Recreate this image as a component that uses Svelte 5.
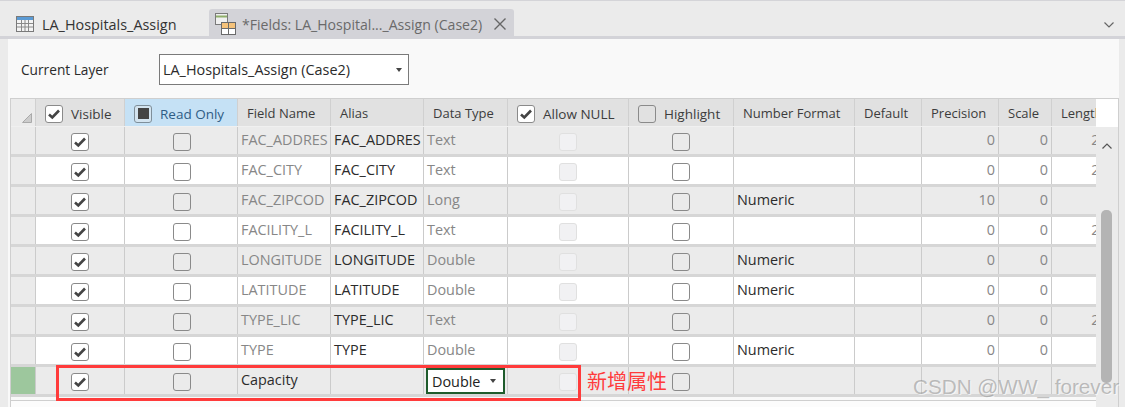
<script>
  const text = 'Text';
  const rows = [
    { name: 'FAC_ADDRES', alias: 'FAC_ADDRES', type: text, fmt: '', prec: 0, len: 254 },
    { name: 'FAC_CITY', alias: 'FAC_CITY', type: text, fmt: '', prec: 0, len: 254 },
    { name: 'FAC_ZIPCOD', alias: 'FAC_ZIPCOD', type: 'Long', fmt: 'Numeric', prec: 10, len: '' },
    { name: 'FACILITY_L', alias: 'FACILITY_L', type: text, fmt: '', prec: 0, len: 254 },
    { name: 'LONGITUDE', alias: 'LONGITUDE', type: 'Double', fmt: 'Numeric', prec: 0, len: '' },
    { name: 'LATITUDE', alias: 'LATITUDE', type: 'Double', fmt: 'Numeric', prec: 0, len: '' },
    { name: 'TYPE_LIC', alias: 'TYPE_LIC', type: text, fmt: '', prec: 0, len: 254 },
    { name: 'TYPE', alias: 'TYPE', type: 'Double', fmt: 'Numeric', prec: 0, len: '' }
  ];
</script>

{#snippet check()}
  <svg width="14" height="12" viewBox="0 0 14 12"><path d="M2 6.5 L5.3 9.5 L12 2.5" fill="none" stroke="#444" stroke-width="2.6" /></svg>
{/snippet}

<div class="page">
  <div class="tabs">
    <div class="tab">
      <svg width="20" height="18" viewBox="0 0 20 18">
        <rect x="1.5" y="1.5" width="17" height="15" fill="#f4f4f4" stroke="#7a7a7a" />
        <rect x="2" y="2" width="16" height="3" fill="#5b9bd5" />
        <path d="M2 8.5h16M2 12h16M6.5 5v11M10 5v11M13.5 5v11" stroke="#8a8a8a" />
      </svg>
      <span class="name">LA_Hospitals_Assign</span>
    </div>
    <div class="tab active">
      <svg width="21" height="23" viewBox="0 0 21 23">
        <rect x=".5" y=".5" width="12" height="11" fill="#f0f0f0" stroke="#7a7a7a" />
        <path d="M1 3.5h11" stroke="#8fae6a" stroke-width="2" />
        <rect x="6.5" y="9.5" width="14" height="12" fill="#fff" stroke="#6a6a6a" />
        <rect x="7" y="10" width="13" height="5.5" fill="#f5c27a" />
        <path d="M7 15.5h13M13.5 10v11" stroke="#6a6a6a" />
      </svg>
      <span>*Fields: LA_Hospital..._Assign (Case2)</span>
      <svg class="close" width="14" height="14" viewBox="0 0 14 14"><path d="M1.5 1.5l11 11M12.5 1.5l-11 11" stroke="#666" stroke-width="1.4" /></svg>
    </div>
    <svg class="more" width="12" height="8" viewBox="0 0 12 8"><path d="M1.5 1.5l4.5 4.5 4.5-4.5" fill="none" stroke="#666" stroke-width="1.2" /></svg>
  </div>

  <div class="panel">
    <div class="layer">
      <label for="layer-box">Current Layer</label>
      <div class="combo" id="layer-box"><span>LA_Hospitals_Assign (Case2)</span><i class="arrow"></i></div>
    </div>

    <div class="grid">
      <div class="table">
        <div class="row head">
          <div class="cell corner"><svg width="10" height="10" viewBox="0 0 10 10"><path d="M9.5 .5V9.5H.5Z" fill="#ccc" stroke="#aaa" /></svg></div>
          <div class="cell boxed"><span class="cb on">{@render check()}</span>Visible</div>
          <div class="cell boxed sel"><span class="cb mixed"><b></b></span>Read Only</div>
          <div class="cell">Field Name</div>
          <div class="cell">Alias</div>
          <div class="cell">Data Type</div>
          <div class="cell boxed"><span class="cb on">{@render check()}</span>Allow NULL</div>
          <div class="cell boxed"><span class="cb"></span>Highlight</div>
          <div class="cell">Number Format</div>
          <div class="cell">Default</div>
          <div class="cell">Precision</div>
          <div class="cell">Scale</div>
          <div class="cell">Length</div>
        </div>

        {#each rows as r, i}
          <div class="row" class:alt={i % 2 === 1}>
            <div class="cell stub"></div>
            <div class="cell mid"><span class="cb on">{@render check()}</span></div>
            <div class="cell mid"><span class="cb shift"></span></div>
            <div class="cell dim">{r.name}</div>
            <div class="cell">{r.alias}</div>
            <div class="cell dim">{r.type}</div>
            <div class="cell mid"><span class="cb off"></span></div>
            <div class="cell mid"><span class="cb"></span></div>
            <div class="cell">{r.fmt}</div>
            <div class="cell"></div>
            <div class="cell num">{r.prec}</div>
            <div class="cell num">0</div>
            <div class="cell num">{r.len}</div>
          </div>
        {/each}

        <div class="row">
          <div class="cell stub new"></div>
          <div class="cell mid"><span class="cb on">{@render check()}</span></div>
          <div class="cell mid"><span class="cb shift"></span></div>
          <div class="cell">Capacity</div>
          <div class="cell"></div>
          <div class="cell edit"><div class="pick"><span>Double</span><i class="arrow"></i></div></div>
          <div class="cell mid"><span class="cb off"></span></div>
          <div class="cell mid"><span class="cb"></span></div>
          <div class="cell"></div>
          <div class="cell"></div>
          <div class="cell"></div>
          <div class="cell"></div>
          <div class="cell"></div>
        </div>
        <div class="foot"></div>
      </div>

      <div class="scroll">
        <div class="scroll-head"></div>
        <svg class="up" width="12" height="8" viewBox="0 0 12 8"><path d="M1.5 6.5l4.5-4.5 4.5 4.5" fill="none" stroke="#555" stroke-width="1.2" /></svg>
        <div class="thumb"></div>
      </div>
    </div>

    <div class="mark"></div>
    <div class="added">新增属性</div>
    <div class="wm">CSDN @WW_ forever</div>
  </div>
</div>

<style>
  :global(body) {
    margin: 0;
    background: #ebebeb;
  }

  .page {
    width: 1125px;
    height: 407px;
    overflow: hidden;
    box-sizing: border-box;
    border-top: 1px solid #d4d4d8;
    font-family: "Open Sans", "Noto Sans", sans-serif;
    font-size: 14.4px;
    color: #2b2b2b;
    display: flex;
    flex-direction: column;
  }

  .tabs {
    height: 35px;
    flex: none;
    display: flex;
    align-items: flex-end;
    padding-left: 15px;
    border-bottom: 3px solid #d3d3d8;
    position: relative;
  }

  .tab {
    display: flex;
    align-items: center;
    height: 27px;
    box-sizing: border-box;
    padding-top: 3px;
    gap: 7px;
    width: 194px;
    color: #333;
  }

  .tab span {
    font-size: 14.1px;
  }

  .tab .name {
    font-size: 14.4px;
  }

  .tab.active {
    width: 305px;
    background: #d3d3d8;
    border-radius: 3px 3px 0 0;
    padding-left: 6px;
    gap: 6px;
    color: #6a6a6a;
  }

  .close {
    margin-left: 5px;
  }

  .more {
    position: absolute;
    right: 10px;
    top: 20px;
  }

  .panel {
    margin-left: 8px;
    margin-right: 6px;
    flex: 1;
    background: #f9f9f9;
    position: relative;
    min-height: 0;
  }

  .layer {
    height: 59px;
    box-sizing: border-box;
    padding: 15px 0 0 13px;
    display: flex;
    align-items: flex-start;
  }

  .layer label {
    width: 138px;
    line-height: 31px;
    font-size: 13.7px;
  }

  .combo {
    width: 250px;
    height: 31px;
    box-sizing: border-box;
    border: 1px solid #7a7a7a;
    background: #fff;
    padding: 0 6px 0 3px;
    display: flex;
    align-items: center;
    justify-content: space-between;
  }

  .arrow {
    width: 0;
    height: 0;
    border: 3px solid transparent;
    border-top: 4px solid #444;
    border-bottom: 0;
  }

  .grid {
    display: flex;
    margin-left: 2px;
    border-top: 1px solid #cfcfcf;
    border-left: 1px solid #cfcfcf;
    border-right: 1px solid #cfcfcf;
  }

  .table {
    width: 1085px;
    overflow: hidden;
  }

  .row {
    display: grid;
    grid-template-columns: 25px 89px 113px 93px 93px 84px 121px 105px 121px 67px 77px 53px 68px;
    width: 1089px;
    height: 30px;
    box-sizing: border-box;
    background: #ebebeb;
    border-bottom: 3px solid #d6d6d6;
  }

  .row.alt {
    background: #fff;
  }

  .cell {
    border-right: 1px solid #cbcbcb;
    padding: 0 3px 2px;
    line-height: 25px;
    white-space: nowrap;
    overflow: hidden;
    display: flex;
    align-items: center;
    box-sizing: border-box;
    min-width: 0;
  }

  .dim {
    color: #878787;
  }

  .num {
    justify-content: flex-end;
    color: #878787;
  }

  .cell.mid {
    justify-content: center;
    padding: 3px 3px 0;
  }

  .stub {
    background: #ebebeb;
  }

  .stub.new {
    background: #9dc79d;
  }

  .head {
    height: 28px;
    background: #e1e1e1;
    border-bottom: 1px solid #f0f0f0;
    color: #3c3c3c;
    font-size: 13px;
  }

  .head .cell {
    padding: 2px 0 0 9px;
    border-right: 1px solid #d0d0d0;
  }

  .head .corner {
    background: #ebebeb;
    padding: 10px 0 0 11px;
  }

  .head .boxed {
    gap: 8px;
    padding-left: 9px;
    font-size: 13.5px;
    line-height: 27px;
    padding-top: 4px;
  }

  .head .boxed .cb {
    margin-top: -2px;
  }

  .head .sel {
    background: #c5e1f5;
    color: #2f5d85;
  }

  .cb {
    width: 18px;
    height: 18px;
    flex: none;
    box-sizing: border-box;
    border: 1.5px solid #8a8a8a;
    border-radius: 3px;
    background: #fff;
    display: flex;
    align-items: center;
    justify-content: center;
  }

  .cb.shift {
    margin-left: 2px;
  }

  .row:not(.alt):not(.head) .cb:not(.on):not(.off) {
    background: #ebebeb;
  }

  .head .cb:not(.on) {
    background: #e1e1e1;
  }

  .head .cb.mixed {
    background: #d3e4f0;
    border-color: #7f8f9a;
  }

  .cb.off,
  .row:not(.head) .cb.off {
    border-color: #e0e0e0;
    background: #f1f1f3;
    border-width: 1px;
  }

  .cb.mixed b {
    width: 11px;
    height: 11px;
    background: #444;
  }

  .edit {
    padding: 1px 2px 0;
  }

  .pick {
    width: 100%;
    height: 26px;
    box-sizing: border-box;
    border: 2px solid #1f5c2c;
    background: #fff;
    padding: 0 7px 0 4px;
    display: flex;
    align-items: center;
    justify-content: space-between;
    color: #222;
  }

  .foot {
    height: 10px;
    background: #fcfcfc;
    border-top: 1px solid #cfcfcf;
    margin-top: 3px;
  }

  .scroll {
    width: 22px;
    flex: none;
    background: #ebebeb;
    display: flex;
    flex-direction: column;
    align-items: center;
  }

  .scroll-head {
    height: 28px;
    width: 100%;
    background: #fff;
  }

  .up {
    margin-top: 15px;
  }

  .thumb {
    width: 11px;
    height: 173px;
    margin-top: 60px;
    margin-right: 2px;
    background: #b4b4b4;
    border-radius: 5px;
  }

  .mark {
    position: absolute;
    left: 48px;
    top: 326px;
    width: 525px;
    height: 36px;
    box-sizing: border-box;
    border: 3px solid #ff3b3b;
  }

  .added {
    position: absolute;
    left: 579px;
    top: 327px;
    font-family: "Noto Sans CJK SC", sans-serif;
    font-size: 20px;
    line-height: 30px;
    color: #ff3b3b;
  }

  .wm {
    position: absolute;
    left: 905px;
    top: 335px;
    white-space: nowrap;
    font-family: "Liberation Sans", sans-serif;
    font-size: 20.7px;
    line-height: 26px;
    color: rgba(140, 140, 140, 0.55);
    text-shadow: 1px 1px 0 rgba(255, 255, 255, 0.6);
  }
</style>
